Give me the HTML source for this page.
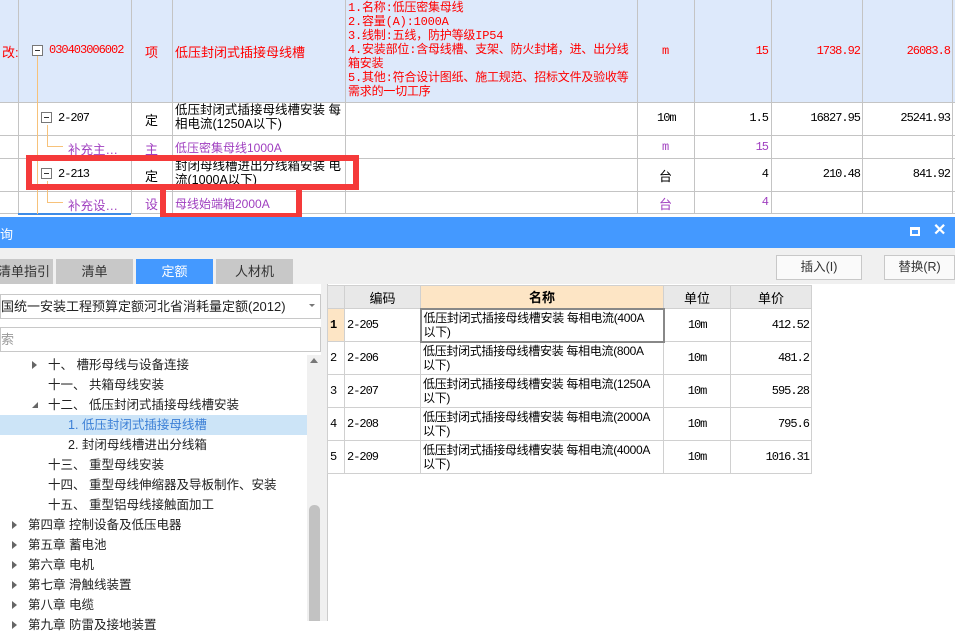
<!DOCTYPE html>
<html><head><meta charset="utf-8"><style>
*{margin:0;padding:0;box-sizing:border-box}
body{width:955px;height:621px;overflow:hidden;position:relative;background:#fff;font-family:"Liberation Sans","Noto Sans CJK SC",sans-serif;font-size:12px}
.a{position:absolute;white-space:nowrap}
.s{font-family:"Liberation Mono","WenQuanYi Zen Hei","Noto Sans CJK SC",monospace;font-size:11.5px}
.n{font-family:"Liberation Mono",monospace;font-size:12px;letter-spacing:-1px}
.vl{position:absolute;width:1px;background:#c4c4c4}
.hl{position:absolute;height:1px;background:#c4c4c4}
.red{color:#f00}.pur{color:#a040c0}
.box{position:absolute;width:11px;height:11px;border:1px solid #777;background:#fff}
.box:after{content:"";position:absolute;left:2px;top:4px;width:5px;height:1px;background:#333}
.tree{position:absolute;left:0;width:307px;height:20px;line-height:20px;font-size:12.5px;color:#222;white-space:nowrap}
.tri{position:absolute;width:0;height:0;border-top:4px solid transparent;border-bottom:4px solid transparent;border-left:5px solid #666;top:6px}
.g{table-layout:fixed}
.g td{border:1px solid #d0d0d0;height:33px;padding:0 2px;vertical-align:middle;white-space:nowrap;overflow:hidden}
.g .nm{font-family:"Liberation Sans","Noto Sans CJK SC",sans-serif;font-size:12px;line-height:14px;letter-spacing:-0.3px}
</style></head><body>
<div class="a" style="left:0;top:0;width:955px;height:102px;background:#dde9fb"></div>
<div class="vl" style="left:18px;top:0;height:213px"></div>
<div class="vl" style="left:131px;top:0;height:213px"></div>
<div class="vl" style="left:172px;top:0;height:213px"></div>
<div class="vl" style="left:345px;top:0;height:213px"></div>
<div class="vl" style="left:637px;top:0;height:213px"></div>
<div class="vl" style="left:694px;top:0;height:213px"></div>
<div class="vl" style="left:771px;top:0;height:213px"></div>
<div class="vl" style="left:862px;top:0;height:213px"></div>
<div class="vl" style="left:952px;top:0;height:213px"></div>
<div class="hl" style="left:0;top:102px;width:955px"></div>
<div class="hl" style="left:0;top:135px;width:955px"></div>
<div class="hl" style="left:0;top:158px;width:955px"></div>
<div class="hl" style="left:0;top:191px;width:955px"></div>
<div class="hl" style="left:0;top:213px;width:955px"></div>
<div class="a" style="left:18px;top:213px;width:113px;height:2px;background:#3d8be6"></div>
<div class="a" style="left:37px;top:56px;width:1px;height:158px;background:#f7c27a"></div>
<div class="a" style="left:47px;top:125px;width:1px;height:22px;background:#f7c27a"></div>
<div class="a" style="left:47px;top:146px;width:16px;height:1px;background:#f7c27a"></div>
<div class="a" style="left:47px;top:181px;width:1px;height:22px;background:#f7c27a"></div>
<div class="a" style="left:47px;top:202px;width:16px;height:1px;background:#f7c27a"></div>

<div class="a red" style="left:2px;top:42px;font-size:13px">改:</div>
<div class="box" style="left:32px;top:45px"></div>
<div class="a n red" style="left:49px;top:43px">030403006002</div>
<div class="a red" style="left:145px;top:42px;font-size:13px">项</div>
<div class="a red" style="left:175px;top:42px;font-size:13px">低压封闭式插接母线槽</div>
<div class="a s red" style="left:348px;top:1px;line-height:14px;font-size:12px;letter-spacing:-0.2px">1.名称:低压密集母线<br>2.容量(A):1000A<br>3.线制:五线，防护等级IP54<br>4.安装部位:含母线槽、支架、防火封堵，进、出分线<br>箱安装<br>5.其他:符合设计图纸、施工规范、招标文件及验收等<br>需求的一切工序</div>
<div class="a n red" style="left:662px;top:44px">m</div>
<div class="a n red" style="left:720px;top:44px;width:48px;text-align:right">15</div>
<div class="a n red" style="left:780px;top:44px;width:80px;text-align:right">1738.92</div>
<div class="a n red" style="left:870px;top:44px;width:80px;text-align:right">26083.8</div>

<div class="box" style="left:41px;top:112px"></div>
<div class="a n" style="left:58px;top:111px">2-207</div>
<div class="a" style="left:145px;top:110px;font-size:13px">定</div>
<div class="a" style="left:175px;top:103px;line-height:14px;font-size:12.5px">低压封闭式插接母线槽安装 每<br>相电流(1250A以下)</div>
<div class="a n" style="left:657px;top:111px">10m</div>
<div class="a n" style="left:720px;top:111px;width:48px;text-align:right">1.5</div>
<div class="a n" style="left:780px;top:111px;width:80px;text-align:right">16827.95</div>
<div class="a n" style="left:870px;top:111px;width:80px;text-align:right">25241.93</div>

<div class="a pur" style="left:68px;top:139px;font-size:12.5px">补充主…</div>
<div class="a pur" style="left:145px;top:139px;font-size:13px">主</div>
<div class="a pur" style="left:175px;top:139px;font-size:12px">低压密集母线1000A</div>
<div class="a n pur" style="left:662px;top:140px">m</div>
<div class="a n pur" style="left:720px;top:140px;width:48px;text-align:right">15</div>

<div class="box" style="left:41px;top:168px"></div>
<div class="a n" style="left:58px;top:167px">2-213</div>
<div class="a" style="left:145px;top:166px;font-size:13px">定</div>
<div class="a" style="left:175px;top:159px;line-height:14px;font-size:12.5px">封闭母线槽进出分线箱安装 电<br>流(1000A以下)</div>
<div class="a" style="left:659px;top:166px;font-size:13px">台</div>
<div class="a n" style="left:720px;top:167px;width:48px;text-align:right">4</div>
<div class="a n" style="left:780px;top:167px;width:80px;text-align:right">210.48</div>
<div class="a n" style="left:870px;top:167px;width:80px;text-align:right">841.92</div>

<div class="a pur" style="left:68px;top:195px;font-size:12.5px">补充设…</div>
<div class="a pur" style="left:145px;top:194px;font-size:13px">设</div>
<div class="a pur" style="left:175px;top:195px;font-size:12px">母线始端箱2000A</div>
<div class="a pur" style="left:659px;top:194px;font-size:13px">台</div>
<div class="a n pur" style="left:720px;top:195px;width:48px;text-align:right">4</div>

<div class="a" style="left:26px;top:155px;width:333px;height:35px;border:6px solid #f53a3a"></div>
<div class="a" style="left:160px;top:184px;width:142px;height:35px;border:6px solid #f53a3a;border-top:none"></div>

<div class="a" style="left:0;top:217px;width:955px;height:404px;background:#f0f0f0"></div>
<div class="a" style="left:0;top:217px;width:955px;height:31px;background:#4499ff"></div>
<div class="a" style="left:0;top:224px;color:#fff;font-size:13px">询</div>
<div class="a" style="left:910px;top:227px;width:10px;height:9px;border:2px solid #fff;border-top-width:3px"></div>
<div class="a" style="left:933px;top:220px;color:#fff;font-size:16px;font-weight:bold">✕</div>

<div class="a" style="left:0;top:259px;width:53px;height:25px;background:#c8c8c8;overflow:hidden"><span class="a" style="right:3px;top:0;line-height:25px;font-size:13px;color:#333">清单指引</span></div>
<div class="a" style="left:56px;top:259px;width:77px;height:25px;background:#c8c8c8;line-height:25px;text-align:center;font-size:13px;color:#333">清单</div>
<div class="a" style="left:136px;top:259px;width:77px;height:25px;background:#4499ff;line-height:25px;text-align:center;font-size:13px;color:#fff">定额</div>
<div class="a" style="left:216px;top:259px;width:77px;height:25px;background:#c8c8c8;line-height:25px;text-align:center;font-size:13px;color:#333">人材机</div>

<div class="a" style="left:776px;top:255px;width:86px;height:25px;background:#fafafa;border:1px solid #c8c8c8;line-height:23px;text-align:center;font-size:12.5px;color:#333">插入(I)</div>
<div class="a" style="left:884px;top:255px;width:71px;height:25px;background:#fafafa;border:1px solid #c8c8c8;line-height:23px;text-align:center;font-size:12.5px;color:#333">替换(R)</div>

<div class="a" style="left:0;top:284px;width:326px;height:337px;background:#fff"></div>
<div class="a" style="left:0;top:294px;width:321px;height:25px;border:1px solid #c8c8c8;line-height:23px;font-size:13px;color:#222">国统一安装工程预算定额河北省消耗量定额(2012)</div>
<div class="a" style="left:309px;top:304px;border-left:3px solid transparent;border-right:3px solid transparent;border-top:3px solid #777"></div>
<div class="a" style="left:0;top:327px;width:321px;height:25px;border:1px solid #c8c8c8;line-height:23px;font-size:13px;color:#999">索</div>

<div class="a" style="left:0;top:415px;width:307px;height:20px;background:#cce4f7"></div>
<div class="tree" style="top:355px"><span class="tri" style="left:32px"></span><span style="position:absolute;left:48px">十、 槽形母线与设备连接</span></div>
<div class="tree" style="top:375px"><span style="position:absolute;left:48px">十一、 共箱母线安装</span></div>
<div class="tree" style="top:395px"><span class="a" style="left:32px;top:7px;border-left:6px solid transparent;border-bottom:6px solid #666"></span><span style="position:absolute;left:48px">十二、 低压封闭式插接母线槽安装</span></div>
<div class="tree" style="top:415px;color:#3b7fd6"><span style="position:absolute;left:68px">1. 低压封闭式插接母线槽</span></div>
<div class="tree" style="top:435px"><span style="position:absolute;left:68px">2. 封闭母线槽进出分线箱</span></div>
<div class="tree" style="top:455px"><span style="position:absolute;left:48px">十三、 重型母线安装</span></div>
<div class="tree" style="top:475px"><span style="position:absolute;left:48px">十四、 重型母线伸缩器及导板制作、安装</span></div>
<div class="tree" style="top:495px"><span style="position:absolute;left:48px">十五、 重型铝母线接触面加工</span></div>
<div class="tree" style="top:515px"><span class="tri" style="left:12px"></span><span style="position:absolute;left:28px">第四章 控制设备及低压电器</span></div>
<div class="tree" style="top:535px"><span class="tri" style="left:12px"></span><span style="position:absolute;left:28px">第五章 蓄电池</span></div>
<div class="tree" style="top:555px"><span class="tri" style="left:12px"></span><span style="position:absolute;left:28px">第六章 电机</span></div>
<div class="tree" style="top:575px"><span class="tri" style="left:12px"></span><span style="position:absolute;left:28px">第七章 滑触线装置</span></div>
<div class="tree" style="top:595px"><span class="tri" style="left:12px"></span><span style="position:absolute;left:28px">第八章 电缆</span></div>
<div class="tree" style="top:615px"><span class="tri" style="left:12px"></span><span style="position:absolute;left:28px">第九章 防雷及接地装置</span></div>
<div class="a" style="left:307px;top:355px;width:14px;height:266px;background:#f0f0f0"></div>
<div class="a" style="left:310px;top:358px;border-left:4px solid transparent;border-right:4px solid transparent;border-bottom:5px solid #777"></div>
<div class="a" style="left:309px;top:505px;width:11px;height:116px;background:#c2c2c2;border-radius:5px 5px 0 0"></div>
<div class="a" style="left:321px;top:284px;width:6px;height:337px;background:#f0f0f0"></div>

<div class="a" style="left:327px;top:284px;width:628px;height:337px;background:#fff;border-left:1px solid #ccc"></div>
<table class="a g" style="left:327px;top:285px;border-collapse:collapse;width:484px">
<colgroup><col style="width:17px"><col style="width:76px"><col style="width:243px"><col style="width:67px"><col style="width:81px"></colgroup>
<tr style="background:#e8e8e8"><td style="height:23px"></td><td style="height:23px;text-align:center;font-size:13px">编码</td><td style="height:23px;text-align:center;background:#fde5c5;font-weight:bold;font-size:13px">名称</td><td style="height:23px;text-align:center;font-size:13px">单位</td><td style="height:23px;text-align:center;font-size:13px">单价</td></tr>
<tr><td class="n" style="background:#fde5c5;font-weight:bold">1</td><td class="n">2-205</td><td class="nm" style="border:2px solid #888">低压封闭式插接母线槽安装 每相电流(400A<br>以下)</td><td class="n" style="text-align:center">10m</td><td class="n" style="text-align:right">412.52</td></tr>
<tr><td class="n">2</td><td class="n">2-206</td><td class="nm">低压封闭式插接母线槽安装 每相电流(800A<br>以下)</td><td class="n" style="text-align:center">10m</td><td class="n" style="text-align:right">481.2</td></tr>
<tr><td class="n">3</td><td class="n">2-207</td><td class="nm">低压封闭式插接母线槽安装 每相电流(1250A<br>以下)</td><td class="n" style="text-align:center">10m</td><td class="n" style="text-align:right">595.28</td></tr>
<tr><td class="n">4</td><td class="n">2-208</td><td class="nm">低压封闭式插接母线槽安装 每相电流(2000A<br>以下)</td><td class="n" style="text-align:center">10m</td><td class="n" style="text-align:right">795.6</td></tr>
<tr><td class="n">5</td><td class="n">2-209</td><td class="nm">低压封闭式插接母线槽安装 每相电流(4000A<br>以下)</td><td class="n" style="text-align:center">10m</td><td class="n" style="text-align:right">1016.31</td></tr>
</table>
</body></html>
